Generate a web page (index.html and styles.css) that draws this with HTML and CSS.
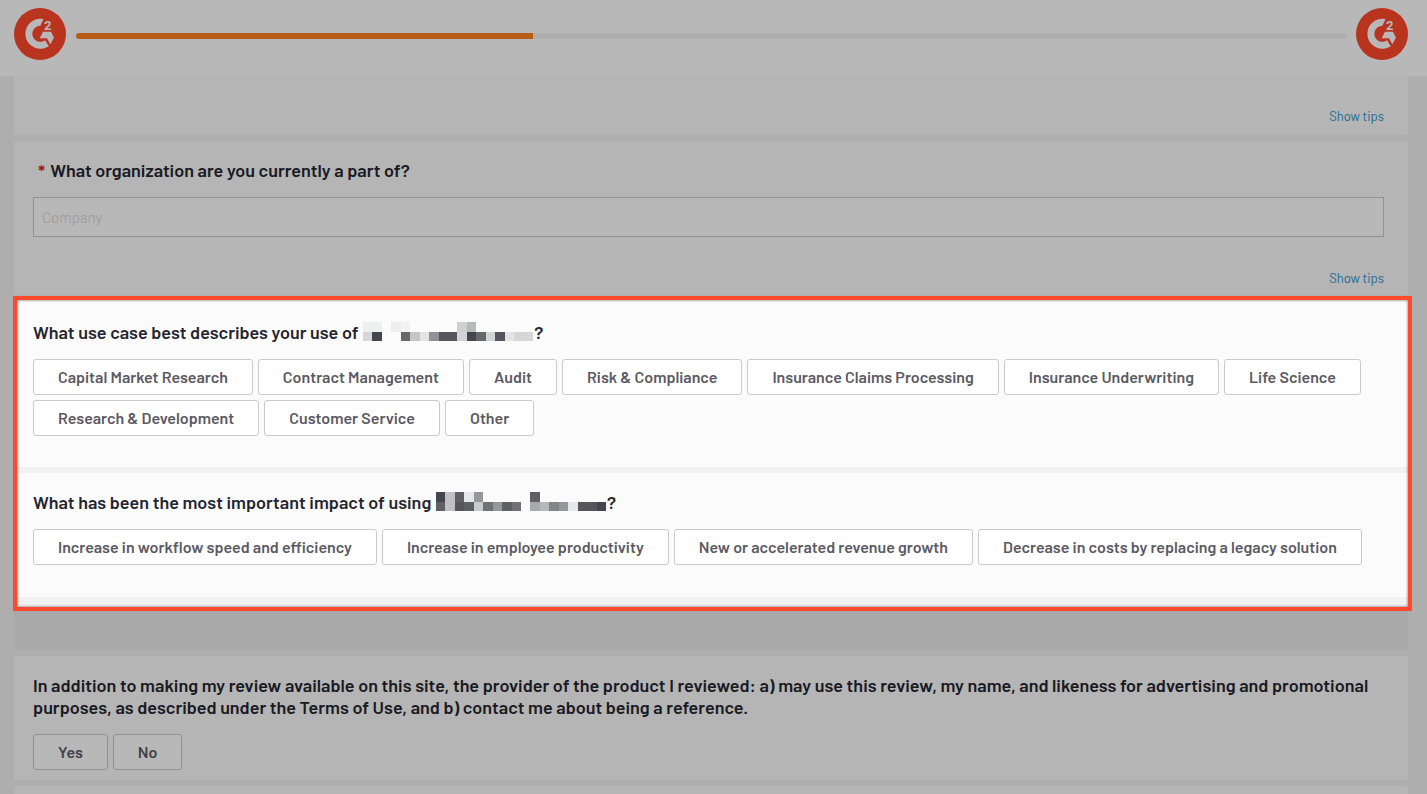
FILE: index.html
```html
<!DOCTYPE html>
<html lang="en">
<head>
<meta charset="utf-8">
<meta name="viewport" content="width=device-width, initial-scale=1">
<title>Product review</title>
<link rel="stylesheet" href="styles.css">
</head>
<body>
<header class="topbar">
  <svg class="logo" viewBox="0 0 52 52" role="img" aria-label="G2">
    <circle cx="26" cy="26" r="26" fill="#ff492c"/>
    <path fill="#fff" d="M29.500 11 26.300 17.800A8 8 0 1 0 31 32.300L34.800 38.200A15 15 0 1 1 26 10.800Q28 10.600 29.500 11ZM29 23.700H37L40 29.700 36.300 36.300 33 30.300H25.700Z"/>
    <text x="30" y="22" class="logo-two">2</text>
  </svg>
  <div class="progress" role="progressbar" aria-label="Review progress" aria-valuenow="36" aria-valuemin="0" aria-valuemax="100"><div class="progress-fill" style="width:36%"></div></div>
  <svg class="logo" viewBox="0 0 52 52" role="img" aria-label="G2">
    <circle cx="26" cy="26" r="26" fill="#ff492c"/>
    <path fill="#fff" d="M29.500 11 26.300 17.800A8 8 0 1 0 31 32.300L34.800 38.200A15 15 0 1 1 26 10.800Q28 10.600 29.500 11ZM29 23.700H37L40 29.700 36.300 36.300 33 30.300H25.700Z"/>
    <text x="30" y="22" class="logo-two">2</text>
  </svg>
</header>

<main class="survey">
  <section class="card card-tips">
    <a class="tips" href="#tips">Show tips</a>
  </section>

  <section class="card card-company">
    <label class="question required" for="company"><span class="star">*</span>What organization are you currently a part of?</label>
    <input class="field" id="company" type="text" placeholder="Company">
    <a class="tips" href="#tips">Show tips</a>
  </section>

  <div class="spotlight">
    <section class="card">
      <h2 class="question">What use case best describes your use of <svg class="redacted" viewBox="0 0 18 2" preserveAspectRatio="none" shape-rendering="crispEdges" aria-hidden="true"><path fill="#eef0f0" d="M0 0h2v1H0z"/><path fill="#ededed" d="M3 0h1v1H3z"/><path fill="#f3f3f3" d="M4 0h1v1H4z"/><path fill="#d0d0d1" d="M10 0h1v1h-1z"/><path fill="#b8b9bb" d="M11 0h1v1h-1z"/><path fill="#d5d7d6" d="M0 1h1v1H0zM16 1h2v1h-2z"/><path fill="#46444f" d="M1 1h1v1H1zM11 1h1v1h-1z"/><path fill="#67676c" d="M4 1h1v1H4zM12 1h1v1h-1z"/><path fill="#c3c5c7" d="M5 1h1v1H5z"/><path fill="#e3e5e5" d="M6 1h1v1H6zM15 1h1v1h-1z"/><path fill="#929295" d="M7 1h1v1H7z"/><path fill="#56555e" d="M8 1h2v1H8zM14 1h1v1h-1z"/><path fill="#d1d3d5" d="M10 1h1v1h-1zM13 1h1v1h-1z"/></svg>?</h2>
      <div class="options">
        <button type="button" class="option">Capital Market Research</button>
        <button type="button" class="option">Contract Management</button>
        <button type="button" class="option">Audit</button>
        <button type="button" class="option">Risk &amp; Compliance</button>
        <button type="button" class="option">Insurance Claims Processing</button>
        <button type="button" class="option">Insurance Underwriting</button>
        <button type="button" class="option">Life Science</button>
        <button type="button" class="option">Research &amp; Development</button>
        <button type="button" class="option">Customer Service</button>
        <button type="button" class="option">Other</button>
      </div>
    </section>
    <section class="card">
      <h2 class="question">What has been the most important impact of using <svg class="redacted" viewBox="0 0 18 2" preserveAspectRatio="none" shape-rendering="crispEdges" aria-hidden="true"><path fill="#46444f" d="M0 0h1v1H0zM17 1h1v1h-1z"/><path fill="#bfc0c2" d="M1 0h1v2H1z"/><path fill="#605f66" d="M2 0h1v1H2zM0 1h1v1H0zM3 1h1v1H3zM10 0h1v1h-1zM7 1h1v1H7z"/><path fill="#e6e7e8" d="M3 0h1v1H3zM14 1h1v1h-1z"/><path fill="#96979a" d="M4 0h1v1H4zM6 1h1v1H6zM13 1h1v1h-1z"/><path fill="#56555c" d="M2 1h1v1H2zM15 1h2v1h-2z"/><path fill="#c9cbcd" d="M4 1h1v1H4z"/><path fill="#707075" d="M5 1h1v1H5zM8 1h1v1H8z"/><path fill="#a8a9aa" d="M10 1h1v1h-1z"/><path fill="#b6b8b9" d="M11 1h1v1h-1z"/><path fill="#858588" d="M12 1h1v1h-1z"/></svg>?</h2>
      <div class="options">
        <button type="button" class="option">Increase in workflow speed and efficiency</button>
        <button type="button" class="option">Increase in employee productivity</button>
        <button type="button" class="option">New or accelerated revenue growth</button>
        <button type="button" class="option">Decrease in costs by replacing a legacy solution</button>
      </div>
    </section>
  </div>

  <div class="divider-band"></div>

  <section class="card card-consent">
    <h2 class="question">In addition to making my review available on this site, the provider of the product I reviewed: a) may use this review, my name, and likeness for advertising and promotional purposes, as described under the Terms of Use, and b) contact me about being a reference.</h2>
    <div class="options">
      <button type="button" class="option">Yes</button>
      <button type="button" class="option">No</button>
    </div>
  </section>

  <section class="card card-next"></section>
</main>
</body>
</html>
```
FILE: styles.css
```css
* { box-sizing: border-box; }

body {
  margin: 0;
  min-height: 100vh;
  display: flex;
  flex-direction: column;
  background: #f2f2f2;
  color: #252530;
  font-family: Barlow, Roboto, sans-serif;
}

.topbar {
  display: flex;
  align-items: flex-start;
  gap: 10px;
  height: 76px;
  padding: 8px 19px 0 14px;
  background: #fff;
}

.logo { width: 52px; height: 52px; flex: none; }
.logo-two { font: 700 13px Roboto, sans-serif; fill: #fff; }

.progress {
  flex: 1;
  height: 6px;
  margin-top: 25px;
  border-radius: 3px;
  background: #f2f2f2;
  overflow: hidden;
}
.progress-fill { height: 100%; background: #ff8222; }

.survey {
  flex: 1;
  display: flex;
  flex-direction: column;
  gap: 6px;
  padding: 0 19px 0 14px;
}

.card {
  display: flex;
  flex-direction: column;
  padding: 18px 24px 32px 19px;
  border-radius: 3px;
  background: #fbfbfb;
}

.card-tips { padding-top: 31px; padding-bottom: 10px; border-radius: 0 0 3px 3px; }
.card-company { padding-bottom: 8px; }
.card-consent { padding-bottom: 10px; }
.card-next { flex: 1; padding: 8px 0 0; border-radius: 3px 3px 0 0; }

.tips {
  align-self: flex-end;
  color: #2e93cc;
  font-size: 13px;
  line-height: 18px;
  text-decoration: none;
}
.field + .tips { margin-top: 32px; }

.question {
  margin: 0 0 16px;
  font-size: 18px;
  font-weight: 600;
  line-height: 22px;
}
.required { padding-left: 5px; }
.star { margin-right: 5px; color: #d9230f; }

.redacted { width: 170px; height: 19px; margin: 0 1px; vertical-align: -2px; }

.field {
  width: 100%;
  height: 40px;
  padding: 0 8px;
  border: 1px solid #cacaca;
  border-radius: 0;
  background: #fff;
  color: #252530;
  font: 400 15px Barlow, Roboto, sans-serif;
}
.field::placeholder { color: #dcdcdc; opacity: 1; }

.options { display: flex; flex-wrap: wrap; gap: 5px; }

.option {
  height: 36px;
  padding: 0 24px 2px;
  border: 1px solid #cacaca;
  border-radius: 3px;
  background: #fff;
  color: #5b5a63;
  font: 600 16px Barlow, Roboto, sans-serif;
  white-space: nowrap;
}

/* Framed questions stay bright while the shadow dims everything around them. */
.spotlight {
  position: relative;
  z-index: 1;
  display: flex;
  flex-direction: column;
  gap: 6px;
  margin: -5px -4px -6px -1px;
  padding-bottom: 10px;
  border: 4px solid #ff492c;
  background: #f2f2f2;
  box-shadow: 0 0 0 200vmax rgba(0, 0, 0, 0.28);
}
.spotlight::after {
  content: "";
  position: absolute;
  inset: 0;
  box-shadow: inset 0 0 3px rgba(0, 0, 0, 0.6);
  pointer-events: none;
}
.spotlight .card { padding-left: 16px; border-radius: 0; }
.spotlight .card:first-child { padding-top: 21px; padding-bottom: 31px; }

.divider-band { height: 39px; background: #eaeaea; }
```
